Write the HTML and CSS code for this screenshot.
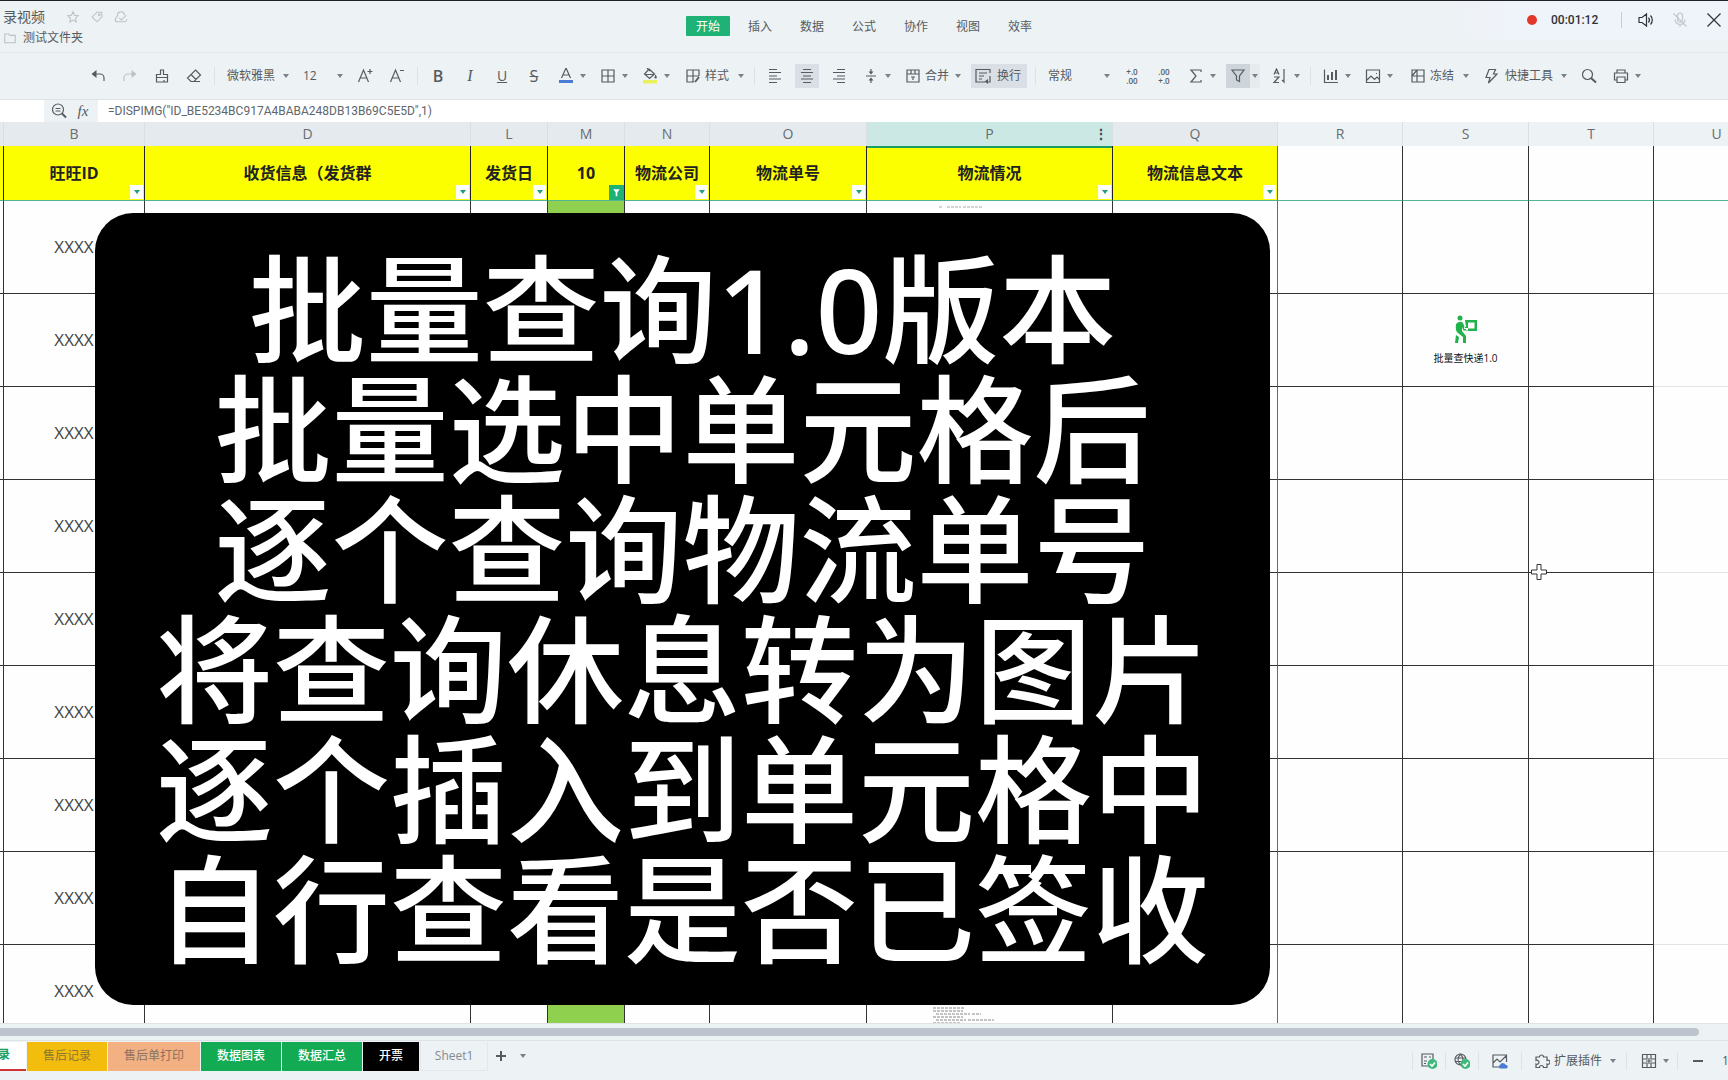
FILE: index.html
```html
<!DOCTYPE html>
<html lang="zh-CN">
<head>
<meta charset="utf-8">
<title>录视频</title>
<link rel="stylesheet" href="styles.css">
</head>
<body>
<header class="topbar">
  <div class="doc">
    <div class="doc-line">
      <span class="doc-title">录视频</span>
      <button class="mini" aria-label="收藏"><svg viewBox="0 0 16 16"><path d="M8 2l1.8 4 4.2.5-3.1 2.9.8 4.3L8 11.600l-3.700 2.100.8-4.300L2 6.500 6.200 6z"/></svg></button>
      <button class="mini" aria-label="标签"><svg viewBox="0 0 16 16"><path d="M8 2.500h5.500V8L8 13.500 2.500 8z"/><circle cx="10.500" cy="5.500" r="1"/></svg></button>
      <button class="mini" aria-label="云同步"><svg viewBox="0 0 16 16"><path d="M12 6a4 4 0 0 0-8 0c0 2-2.500 3-2.500 5a2.500 2.500 0 0 0 2.500 2.500h8a2.500 2.500 0 0 0 2.500-3M6 9l2.500 2.500L14 6"/></svg></button>
    </div>
    <a class="folder" href="#"><svg viewBox="0 0 16 16"><path d="M2 3.500h4.500L8 5h6v8.500H2z"/></svg>测试文件夹</a>
  </div>
  <nav class="menu">
    <button class="on">开始</button><button>插入</button><button>数据</button><button>公式</button><button>协作</button><button>视图</button><button>效率</button>
  </nav>
  <div class="recorder">
    <span class="rec-dot"></span>
    <span class="rec-time">00:01:12</span>
    <i class="rec-sep"></i>
    <button aria-label="声音"><svg viewBox="0 0 16 16"><path d="M1 5.500h3L8.500 2v12L4 10.500H1zM10.500 5.500a4 4 0 0 1 0 5M12.500 3.500a6.500 6.500 0 0 1 0 9"/></svg></button>
    <button class="muted" aria-label="麦克风"><svg viewBox="0 0 16 16"><rect x="5.500" y="1" width="5" height="9" rx="2.500"/><path d="M3 7.500a5 5 0 0 0 10 0M8 12.500V15M1.500 1.500l13 13"/></svg></button>
    <button aria-label="关闭"><svg viewBox="0 0 16 16"><path d="M1.500 1.500l13 13M14.500 1.500l-13 13"/></svg></button>
  </div>
</header>

<div class="toolbar">
  <button class="tool" aria-label="撤销"><svg viewBox="0 0 16 16"><path d="M3 6h7a4 4 0 0 1 4 4v3"/><path class="fill" d="M6.500 2v8L1.500 6z"/></svg></button>
  <button class="tool off" aria-label="恢复"><svg viewBox="0 0 16 16"><path d="M13 6H6a4 4 0 0 0-4 4v3"/><path class="fill" d="M9.500 2v8l5-4z"/></svg></button>
  <button class="tool" aria-label="格式刷"><svg viewBox="0 0 16 16"><path d="M2.500 14V6.500h4V2h3v4.500h4V14zM2.500 9.500h11M10 14v-2"/></svg></button>
  <button class="tool" aria-label="清除"><svg viewBox="0 0 16 16"><path d="M9.500 2l5 5-6.500 6.500H5L1.500 10zM5 6.500l5 5M8 13.500h6"/></svg></button>
  <i class="sep"></i>
  <label class="pick"><select aria-label="字体"><option>微软雅黑</option></select></label>
  <label class="pick size"><select aria-label="字号"><option>12</option></select></label>
  <button class="tool" aria-label="增大字号"><svg viewBox="0 0 16 16"><path d="M1.500 14L6.500 2l5 12M3.500 10h6M10.500 3.500h5M13 1v5"/></svg></button>
  <button class="tool" aria-label="减小字号"><svg viewBox="0 0 16 16"><path d="M1.500 14L6.500 2l5 12M3.500 10h6M11 2.500h4"/></svg></button>
  <i class="sep"></i>
  <button class="tool glyph bold">B</button>
  <button class="tool glyph ital">I</button>
  <button class="tool glyph under">U</button>
  <button class="tool glyph strike">S</button>
  <button class="tool drop" aria-label="字体颜色"><svg viewBox="0 0 16 16"><path d="M3.500 10L8 0l4.500 10M5 7h6"/><path class="blue" d="M1 12h14v3H1z"/></svg></button>
  <button class="tool drop" aria-label="边框"><svg viewBox="0 0 16 16"><path d="M2 2h12v12H2zM8 2v12M2 8h12"/></svg></button>
  <button class="tool drop" aria-label="填充颜色"><svg viewBox="0 0 16 16"><path d="M7 1l5.500 5L7.500 10.500 2.500 6zM3 6.500h9M5 0l3 3"/><path class="fill" d="M13.500 6.500c2 3 1.500 4 0 4s-1.500-1 0-4z"/><path class="lime" d="M1 12h14v3.500H1z"/></svg></button>
  <button class="tool drop style"><svg viewBox="0 0 16 16"><path d="M9 14H2V2h12v6M8 2v12M2 8h12"/><path class="thick" d="M10 14l4-5"/></svg>样式</button>
  <i class="sep"></i>
  <button class="tool" aria-label="左对齐"><svg viewBox="0 0 16 16"><path d="M2 1.500h8M2 4.500h12M2 8h8M2 11h12M2 14.500h8"/></svg></button>
  <button class="tool hot" aria-label="居中"><svg viewBox="0 0 16 16"><path d="M4 1.500h8M2 4.500h12M4 8h8M2 11h12M4 14.500h8"/></svg></button>
  <button class="tool" aria-label="右对齐"><svg viewBox="0 0 16 16"><path d="M6 1.500h8M2 4.500h12M6 8h8M2 11h12M6 14.500h8"/></svg></button>
  <button class="tool drop" aria-label="垂直对齐"><svg viewBox="0 0 16 16"><path d="M3 8h10M8 1v3M8 12v3"/><path class="fill" d="M5.500 3.500h5L8 6.500zM5.500 12.500h5L8 9.500z"/></svg></button>
  <button class="tool drop merge"><svg viewBox="0 0 16 16"><path d="M2 2h12v12H2zM2 6h12M6 2v4M10 2v4M6 9h4M8 9v3"/></svg>合并</button>
  <button class="tool hot wrap"><svg viewBox="0 0 16 16"><path d="M10 14H1V1.500h14V5M4 5h8M4 8h5M4 11h3M15 8v6h-3"/><path class="fill" d="M13 11v5l-3.500-2.500z"/></svg>换行</button>
  <i class="sep"></i>
  <label class="pick"><select aria-label="数字格式"><option>常规</option></select></label>
  <button class="tool digits" aria-label="减少小数位"><span>+.0</span><span>.00</span></button>
  <button class="tool digits" aria-label="增加小数位"><span>.00</span><span>+.0</span></button>
  <button class="tool drop" aria-label="求和"><svg viewBox="0 0 16 16"><path d="M13 4V2H3l5 6-5 6h10v-2"/></svg></button>
  <button class="tool drop filter" aria-label="筛选"><svg viewBox="0 0 16 16"><path d="M2 2h12L9.500 8v5.500L6.500 12V8z"/></svg></button>
  <button class="tool drop" aria-label="排序"><svg viewBox="0 0 16 16"><path d="M2 6.500L4.500 1 7 6.500M3 5h3M2 9h5l-5 5.500h5M12 1v13l-2-2"/></svg></button>
  <i class="sep"></i>
  <button class="tool drop" aria-label="图表"><svg viewBox="0 0 16 16"><path d="M1.500 1.500v13h13.500"/><path class="thick" d="M5 7v5M9 4v8M13 2v10"/></svg></button>
  <button class="tool drop" aria-label="图片"><svg viewBox="0 0 16 16"><path d="M1.500 2h13v12.500h-13zM2 12l4-4 3.500 3.500L12 9l2.500 2.500M11 5.500h1"/></svg></button>
  <button class="tool drop freeze"><svg viewBox="0 0 16 16"><path d="M2 2h12v12H2zM7 2v12M2 8h12M7 2L2 8"/></svg>冻结</button>
  <button class="tool drop quick"><svg viewBox="0 0 16 16"><path d="M6 1.500h6.500L10.500 6H14L5.500 15 7 9.500H3z"/></svg>快捷工具</button>
  <button class="tool" aria-label="查找"><svg viewBox="0 0 16 16"><circle cx="6.500" cy="6.500" r="5"/><path class="thick" d="M10 10l5 4.500"/></svg></button>
  <button class="tool drop" aria-label="打印"><svg viewBox="0 0 16 16"><path d="M4 5V2h8v3M4 12H1.500V5h13v7H12M4 9h8v5.500H4z"/></svg></button>
</div>

<div class="formula">
  <input class="name-box" aria-label="名称框" value="">
  <button aria-label="浏览公式"><svg viewBox="0 0 16 16"><circle cx="7" cy="6.500" r="5.500"/><path d="M4.500 5.500h5M4.500 8h5"/><path class="thick" d="M11 10.500l4 4"/></svg></button>
  <button class="fx"><i>fx</i></button>
  <input class="formula-box" aria-label="编辑栏" value="=DISPIMG(&quot;ID_BE5234BC917A4BABA248DB13B69C5E5D&quot;,1)">
</div>

<main class="sheet">
  <table class="grid">
    <colgroup><col class="c-a"><col class="c-b"><col class="c-d"><col class="c-l"><col class="c-l"><col class="c-n"><col class="c-o"><col class="c-p"><col class="c-q"><col class="c-r"><col class="c-s"><col class="c-r"><col class="c-s"></colgroup>
    <thead>
      <tr class="letters"><th></th><th>B</th><th>D</th><th>L</th><th>M</th><th>N</th><th>O</th><th class="cur">P<b>⋮</b></th><th>Q</th><th class="plain">R</th><th class="plain">S</th><th class="plain">T</th><th class="plain">U</th></tr>
      <tr class="heads"><th></th><th>旺旺ID<button aria-label="筛选"></button></th><th>收货信息（发货群<button aria-label="筛选"></button></th><th>发货日<button aria-label="筛选"></button></th><th>10<button class="active" aria-label="筛选"><svg viewBox="0 0 16 16"><path d="M4 4h8L9 8v4.500H7V8z"/></svg></button></th><th>物流公司<button aria-label="筛选"></button></th><th>物流单号<button aria-label="筛选"></button></th><th class="cur">物流情况<button aria-label="筛选"></button></th><th class="edge">物流信息文本<button aria-label="筛选"></button></th><th class="blank"></th><th class="blank"></th><th class="blank"></th><th class="blank"></th></tr>
    </thead>
    <tbody>
      <tr><td></td><td>XXXX</td><td></td><td></td><td class="lit"></td><td></td><td></td><td class="shot"><svg viewBox="0 0 70 4"><path d="M0 2h4M8 2h14M24 2h20"/></svg></td><td class="edge"></td><td></td><td></td><td></td><td class="faint"></td></tr>
      <tr><td></td><td>XXXX</td><td></td><td></td><td class="lit"></td><td></td><td></td><td></td><td class="edge"></td><td></td><td><button class="macro"><svg viewBox="0 0 24 28"><circle cx="6" cy="3" r="2.500"/><path d="M2 9q4-4 7-1l2 5h3v2.500H9.500L8 12v4l4 5v7H9v-6l-5-4q-3-2-2-9zM2 20l3 2-1 6H1zM11 5h12v11H12v-2h-2v-2h2zM14 7.500v6h6.500v-6z" fill-rule="evenodd"/></svg>批量查快递1.0</button></td><td></td><td class="faint"></td></tr>
      <tr><td></td><td>XXXX</td><td></td><td></td><td class="lit"></td><td></td><td></td><td></td><td class="edge"></td><td></td><td></td><td></td><td class="faint"></td></tr>
      <tr><td></td><td>XXXX</td><td></td><td></td><td class="lit"></td><td></td><td></td><td></td><td class="edge"></td><td></td><td></td><td></td><td class="faint"></td></tr>
      <tr><td></td><td>XXXX</td><td></td><td></td><td class="lit"></td><td></td><td></td><td></td><td class="edge"></td><td></td><td></td><td></td><td class="faint"></td></tr>
      <tr><td></td><td>XXXX</td><td></td><td></td><td class="lit"></td><td></td><td></td><td></td><td class="edge"></td><td></td><td></td><td></td><td class="faint"></td></tr>
      <tr><td></td><td>XXXX</td><td></td><td></td><td class="lit"></td><td></td><td></td><td></td><td class="edge"></td><td></td><td></td><td></td><td class="faint"></td></tr>
      <tr><td></td><td>XXXX</td><td></td><td></td><td class="lit"></td><td></td><td></td><td></td><td class="edge"></td><td></td><td></td><td></td><td class="faint"></td></tr>
      <tr><td></td><td>XXXX</td><td></td><td></td><td class="lit"></td><td></td><td></td><td class="shot low"><svg viewBox="0 0 70 18"><path d="M0 2h32M0 5h30M3 8h34M39 8h9M0 11h30M3 14h30M35 14h26M0 17h28"/></svg></td><td class="edge"></td><td></td><td></td><td></td><td class="faint"></td></tr>
    </tbody>
  </table>
  <div class="caption">批量查询1.0版本<br>批量选中单元格后<br>逐个查询物流单号<br>将查询休息转为图片<br>逐个插入到单元格中<br>自行查看是否已签收</div>
  <svg class="pointer" viewBox="0 0 16 16"><path d="M6 .5h4V6h5.500v4H10v5.500H6V10H.5V6H6z"/></svg>
</main>

<div class="scroll"><div class="thumb"></div></div>

<footer class="bottom">
  <nav class="tabs">
    <button class="current">录</button><button class="gold">售后记录</button><button class="peach">售后单打印</button><button class="green">数据图表</button><button class="green">数据汇总</button><button class="black">开票</button><button class="none">Sheet1</button>
    <button class="add" aria-label="新建工作表"><svg viewBox="0 0 16 16"><path class="thick" d="M8 3v10M3 8h10"/></svg></button>
    <button class="more" aria-label="更多工作表"></button>
  </nav>
  <div class="status">
    <i class="sep"></i>
    <button class="tool" aria-label="计算完成"><svg viewBox="0 0 16 16"><path d="M1 1h11v12H1zM3 4h3M8 4h2M3 8h3M3 10.500h2"/><circle class="ok" cx="11.500" cy="11" r="5"/><path class="tick" d="M9 11l2 2 3-3.500"/></svg></button>
    <i class="sep"></i>
    <button class="tool" aria-label="网络正常"><svg viewBox="0 0 16 16"><circle cx="6.500" cy="6.500" r="5.500"/><path d="M1 5h11M1 8.500h11M6.500 1q-5 5.500 0 11M6.500 1q5 5.500 0 11"/><circle class="ok" cx="11.500" cy="11" r="5"/><path class="tick" d="M9 11l2 2 3-3.500"/></svg></button>
    <i class="sep"></i>
    <button class="tool wide" aria-label="云图片"><svg viewBox="0 0 16 16"><path d="M8 14H1V2h13.500v7M1 10l4-4 3 3 6-6"/><path class="blue" d="M8 15.500a2.200 2.200 0 0 1 .5-4 3 3 0 0 1 5.300.500 1.800 1.800 0 0 1 .7 3.500z"/></svg></button>
    <i class="sep"></i>
    <button class="tool drop plugin"><svg viewBox="0 0 16 16"><path d="M2 4h3.500a2 2 0 1 1 4 0H13v3.500a2 2 0 1 1 0 3.500v3.500H9.500a2 2 0 1 0-4 0H2V11a2 2 0 1 0 0-3.500z"/></svg>扩展插件</button>
    <i class="sep"></i>
    <button class="tool drop view" aria-label="视图"><svg viewBox="0 0 16 16"><path d="M1.500 1.500h13v13h-13zM6 1.500V6H1.500M10 1.500V6h4.500M6 14.500V10H1.500M10 14.500V10h4.500M8 5v6M5 8h6"/></svg></button>
    <i class="sep"></i>
    <button class="tool minus" aria-label="缩小"><svg viewBox="0 0 16 16"><path class="thick" d="M3 8h10"/></svg></button>
    <span class="zoom">100%</span>
  </div>
</footer>
</body>
</html>
```
FILE: styles.css
```css
* { box-sizing: border-box; }
body {
  margin: 0;
  height: 100vh;
  display: flex;
  flex-direction: column;
  overflow: hidden;
  background: #edf2f4;
  color: #555b61;
  font: 12px/16px "Open Sans", "Noto Sans CJK SC", sans-serif;
}
button, input, select {
  margin: 0;
  padding: 0;
  border: 0;
  border-radius: 0;
  background: none;
  color: inherit;
  font: inherit;
  white-space: nowrap;
}
svg { width: 16px; height: 16px; flex: none; display: block; fill: none; stroke: currentColor; stroke-width: 1.2; }
svg .fill { fill: currentColor; stroke: none; }
svg .thick { stroke-width: 2; }
svg .blue { fill: #4a7bd5; stroke: none; }
svg .lime { fill: #e9f25a; stroke: none; }
svg .ok { fill: #3fb97c; stroke: none; }
svg .tick { stroke: #fff; stroke-width: 1.6; }

.topbar {
  flex: none;
  height: 53px;
  display: grid;
  grid-template-columns: 1fr auto 1fr;
  border-top: 1px solid #1f2026;
  border-bottom: 1px solid #e2e6e9;
}
.doc { padding: 6px 0 0 3px; }
.doc-line { display: flex; align-items: center; height: 20px; }
.doc-title { font-size: 14px; margin-right: 21px; }
.mini { margin-right: 10px; color: #bcc1c6; }
.mini svg { width: 14px; height: 14px; }
.folder { display: flex; align-items: center; gap: 6px; height: 22px; color: inherit; text-decoration: none; }
.folder svg { width: 14px; height: 14px; color: #bcc1c6; }
.menu { display: flex; gap: 8px; padding-top: 15px; }
.menu button { width: 44px; height: 20px; padding-top: 1px; border-radius: 1px; }
.menu .on { background: #1eb277; color: #fff; }
.recorder {
  justify-self: end;
  display: flex;
  align-items: center;
  height: 38px;
  padding: 0 6px 0 100px;
  color: #2f3338;
  background: linear-gradient(90deg, #edf2f4, #eff3fa 80px);
}
.rec-dot { width: 10px; height: 10px; border-radius: 50%; background: #e2382c; margin-right: 14px; }
.rec-time { width: 48px; margin-right: 22px; font-weight: 500; font-family: Roboto, sans-serif; }
.rec-sep { width: 1px; height: 16px; background: #c8ccd2; margin-right: 16px; }
.recorder button { margin-left: 18px; }
.recorder .rec-sep + button { margin-left: 0; }
.recorder .muted { color: #c3c7cc; }

.toolbar {
  flex: none;
  height: 47px;
  display: flex;
  align-items: center;
  gap: 8px;
  padding-left: 86px;
  border-bottom: 1px solid #dfe3e6;
}
.sep { flex: none; width: 1px; height: 18px; background: #dde2e5; }
.tool { flex: none; min-width: 24px; height: 24px; display: flex; align-items: center; padding: 0 4px; gap: 6px; }
.tool.off { color: #bcc1c6; }
.drop::after, .pick::after, .more::after, .heads button::after {
  content: "";
  border: 3px solid transparent;
  border-top: 4px solid #7b8188;
  border-bottom: 0;
}
.drop { padding-right: 2px; }
.drop::after { margin-left: auto; }
.tool.drop { min-width: 34px; }
.style { width: 66px; padding-left: 5px; padding-right: 2px; gap: 4px; }
.merge { width: 62px; gap: 4px; }
.wrap { width: 56px; }
.freeze { width: 68px; padding-left: 7px; gap: 4px; }
.quick { width: 90px; }
.hot { background: #d9dfe5; }
.filter { background: linear-gradient(90deg, #cdd4da 24px, #e6ebee 24px); }
.glyph { justify-content: center; gap: 0; font-size: 16px; }
.bold { font-weight: 600; }
.ital { font-family: "Liberation Serif", serif; font-style: italic; }
.under { text-decoration: underline; font-size: 14px; }
.strike { text-decoration: line-through; }
.digits { flex-direction: column; justify-content: center; gap: 0; padding: 0; font-size: 8px; line-height: 9px; font-weight: 600; }
.pick { flex: none; width: 68px; height: 24px; display: flex; align-items: center; padding: 0 2px 0 4px; }
.pick select { appearance: none; flex: 1; min-width: 0; }
.pick.size { width: 46px; }

.formula { flex: none; height: 22px; display: flex; align-items: center; }
.formula button { width: 24px; height: 22px; display: flex; align-items: center; justify-content: center; }
.name-box { width: 44px; height: 22px; background: #fff; margin-right: 3px; }
.formula .fx { margin-right: 3px; font: 15px "Liberation Serif", serif; }
.formula-box { flex: 1; height: 22px; background: #fff; padding-left: 10px; color: #60666c; font-family: Roboto, sans-serif; }

.sheet { flex: 1; min-height: 0; position: relative; overflow: hidden; background: #fdfefd; border-bottom: 1px solid #dfe3e6; }
.grid { table-layout: fixed; width: 1779px; border-spacing: 0; color: #444; }
.c-a { width: 4px; }
.c-b { width: 141px; }
.c-d { width: 326px; }
.c-l { width: 77px; }
.c-n { width: 85px; }
.c-o { width: 157px; }
.c-p { width: 246px; }
.c-q { width: 165px; }
.c-r { width: 125px; }
.c-s { width: 126px; }
.grid th, .grid td { position: relative; padding: 0; text-align: center; white-space: nowrap; }
.letters th { height: 24px; background: #e5eaee; border-right: 1px solid #dadfe3; font-size: 14px; font-weight: 400; color: #666c72; }
.letters .plain { background: #edf2f4; }
.letters .cur { background: #cce8e4; }
.letters b { position: absolute; right: 4px; color: #444; }
.heads th { height: 55px; background: #fbff00; border-right: 1px solid #222; border-bottom: 1px solid #4fb592; font-size: 16px; font-weight: 700; color: #222; }
.heads .cur { box-shadow: inset 0 2px #1a9e62; }
.heads .blank { background: none; border-right-color: #333; }
.heads .blank:last-child { border-right: 0; }
.heads button { position: absolute; right: 1px; bottom: 1px; width: 13px; height: 14px; display: flex; align-items: center; justify-content: center; background: #fff; }
.heads button::after { border-top-color: #23a076; }
.heads .active { right: 0; bottom: 0; width: 15px; height: 15px; background: #1eb277; }
.heads .active::after { display: none; }
.heads .active svg { width: 13px; height: 13px; fill: #fff; stroke: none; }
.grid td { height: 93px; border-right: 1px solid #333; border-bottom: 1px solid #333; font-size: 17px; }
.grid .edge { border-right-color: #2b8a68; }
.grid .lit { background: #90d04f; }
.grid .faint { border-color: #e1e4e6; }
.grid .shot { vertical-align: top; }
.shot svg { width: 70px; height: 4px; margin: 4px 0 0 72px; stroke: #aaa; stroke-width: 1; stroke-dasharray: 3 1; }
.low svg { height: 18px; margin: 61px 0 0 66px; stroke: #888; }
.macro { display: flex; flex-direction: column; align-items: center; gap: 7px; width: 100%; padding-top: 1px; color: #111; font-size: 10px; }
.macro svg { width: 24px; height: 28px; fill: #22b24c; stroke: none; }
.caption {
  position: absolute;
  left: 95px;
  top: 91px;
  width: 1175px;
  padding: 36px 0;
  border-radius: 38px;
  background: #000;
  color: #fff;
  text-align: center;
  font: 500 117px/120px "Noto Sans", "Noto Sans CJK SC", sans-serif;
  white-space: nowrap;
}
.pointer { position: absolute; left: 1531px; top: 442px; fill: #fff; stroke: #333; stroke-width: 1; }

.scroll { flex: none; height: 17px; padding-top: 4px; border-bottom: 1px solid #dfe3e6; }
.thumb { height: 8px; margin-right: 29px; border-radius: 0 4px 4px 0; background: #bec4cd; }
.bottom { flex: none; height: 39px; display: flex; justify-content: space-between; }
.tabs { display: flex; align-items: center; gap: 1px; height: 30px; }
.tabs button { height: 29px; padding: 0 16px; }
.tabs .current { width: 26px; padding: 0 0 0 16px; direction: rtl; background: #fff; color: #1a9e62; font-weight: 700; border-bottom: 2px solid #d03434; }
.tabs .current { display: flex; align-items: center; justify-content: flex-start; padding: 0 16px 0 0; }
.tabs .gold { background: #f2bd0c; color: #8d7633; }
.tabs .peach { background: #f2b083; color: #8c7060; }
.tabs .green { background: #12ab53; color: #fff; font-weight: 500; }
.tabs .black { background: #000; color: #fff; font-weight: 500; }
.tabs .none { width: 68px; padding: 0; color: #858a90; border: 1px solid #e3e7ea; border-top: 0; }
.tabs .add { padding: 0 4px; }
.tabs .more { padding: 0 6px; display: flex; align-items: center; }
.status { display: flex; align-items: center; gap: 4px; }
.status .wide { min-width: 34px; justify-content: center; }
.status .plugin { width: 96px; padding: 0 6px 0 8px; gap: 4px; }
.status .view { width: 42px; padding: 0 5px 0 10px; }
.status .minus { width: 32px; justify-content: center; }
.zoom { width: 10px; padding-left: 4px; overflow: hidden; }
```
